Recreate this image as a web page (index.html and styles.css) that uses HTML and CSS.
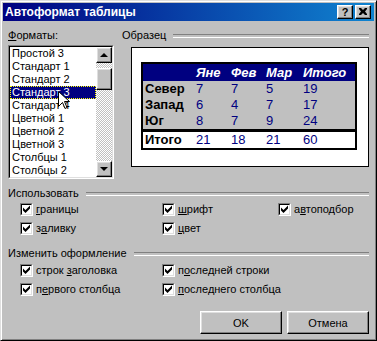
FILE: index.html
```html
<!DOCTYPE html>
<html lang="ru">
<head>
    <meta charset="UTF-8">
    <title>Автоформат таблицы</title>
    <link rel="stylesheet" href="styles.css">
</head>
<body>

    <div class="window">
        <!-- Title bar -->
        <div class="titlebar">
            <span class="title">Автоформат таблицы</span>
            <div class="title-buttons">
                <button class="tbtn">?</button>
                <button class="tbtn">
                    <svg width="8" height="7" viewBox="0 0 8 7">
                        <path d="M0 0h2l2 2 2-2h2v1L6 3.5 8 6v1H6L4 5 2 7H0V6l2-2.5L0 1z" fill="#000"/>
                    </svg>
                </button>
            </div>
        </div>

        <div class="dialog">
            <div class="top">
                <!-- Formats list -->
                <div class="formats">
                    <div class="label"><u>Ф</u>орматы:</div>
                    <div class="listbox">
                        <div class="listbox-in">
                            <ul class="items">
                                <li>Простой 3</li>
                                <li>Стандарт 1</li>
                                <li>Стандарт 2</li>
                                <li class="selected">Стандарт 3</li>
                                <li>Стандарт 4</li>
                                <li>Цветной 1</li>
                                <li>Цветной 2</li>
                                <li>Цветной 3</li>
                                <li>Столбцы 1</li>
                                <li>Столбцы 2</li>
                            </ul>
                            <div class="scrollbar">
                                <div class="sbtn"><span class="arrow-up"></span></div>
                                <div class="track"><div class="thumb"></div></div>
                                <div class="sbtn"><span class="arrow-down"></span></div>
                            </div>
                        </div>
                        <svg class="cursor" width="12" height="19" viewBox="0 0 12 19">
                            <polygon points="0.5,0.5 0.5,15.5 4.5,11.5 7,17.5 9,16.5 6.5,10.5 11.5,10.5" fill="#fff" stroke="#000"/>
                        </svg>
                    </div>
                </div>

                <!-- Sample -->
                <div class="sample">
                    <div class="group-head">Образец</div>
                    <div class="preview">
                        <table class="demo">
                            <tr class="head">
                                <th class="c1"></th>
                                <th class="c2">Яне</th>
                                <th class="c3">Фев</th>
                                <th class="c4">Мар</th>
                                <th class="c5">Итого</th>
                            </tr>
                            <tr><td class="name">Север</td><td>7</td><td>7</td><td>5</td><td>19</td></tr>
                            <tr><td class="name">Запад</td><td>6</td><td>4</td><td>7</td><td>17</td></tr>
                            <tr><td class="name">Юг</td><td>8</td><td>7</td><td>9</td><td>24</td></tr>
                            <tr class="total"><td class="name">Итого</td><td>21</td><td>18</td><td>21</td><td>60</td></tr>
                        </table>
                    </div>
                </div>
            </div>

            <!-- Use -->
            <div class="group-head gap-use">Использовать</div>
            <div class="checks three">
                <label class="check"><span class="box"><span class="box-in"><svg width="9" height="9" viewBox="0 0 9 9"><polygon points="1,2.5 3.5,5 8,0.5 8,3.5 3.5,8 1,5.5"/></svg></span></span><span><u>г</u>раницы</span></label>
                <label class="check"><span class="box"><span class="box-in"><svg width="9" height="9" viewBox="0 0 9 9"><polygon points="1,2.5 3.5,5 8,0.5 8,3.5 3.5,8 1,5.5"/></svg></span></span><span><u>ш</u>рифт</span></label>
                <label class="check"><span class="box"><span class="box-in"><svg width="9" height="9" viewBox="0 0 9 9"><polygon points="1,2.5 3.5,5 8,0.5 8,3.5 3.5,8 1,5.5"/></svg></span></span><span>а<u>в</u>топодбор</span></label>
                <label class="check"><span class="box"><span class="box-in"><svg width="9" height="9" viewBox="0 0 9 9"><polygon points="1,2.5 3.5,5 8,0.5 8,3.5 3.5,8 1,5.5"/></svg></span></span><span>з<u>а</u>ливку</span></label>
                <label class="check"><span class="box"><span class="box-in"><svg width="9" height="9" viewBox="0 0 9 9"><polygon points="1,2.5 3.5,5 8,0.5 8,3.5 3.5,8 1,5.5"/></svg></span></span><span><u>ц</u>вет</span></label>
            </div>

            <!-- Change formatting -->
            <div class="group-head gap-change">Изменить оформление</div>
            <div class="checks two">
                <label class="check"><span class="box"><span class="box-in"><svg width="9" height="9" viewBox="0 0 9 9"><polygon points="1,2.5 3.5,5 8,0.5 8,3.5 3.5,8 1,5.5"/></svg></span></span><span>строк <u>з</u>аголовка</span></label>
                <label class="check"><span class="box"><span class="box-in"><svg width="9" height="9" viewBox="0 0 9 9"><polygon points="1,2.5 3.5,5 8,0.5 8,3.5 3.5,8 1,5.5"/></svg></span></span><span>п<u>о</u>следней строки</span></label>
                <label class="check"><span class="box"><span class="box-in"><svg width="9" height="9" viewBox="0 0 9 9"><polygon points="1,2.5 3.5,5 8,0.5 8,3.5 3.5,8 1,5.5"/></svg></span></span><span>п<u>е</u>рвого столбца</span></label>
                <label class="check"><span class="box"><span class="box-in"><svg width="9" height="9" viewBox="0 0 9 9"><polygon points="1,2.5 3.5,5 8,0.5 8,3.5 3.5,8 1,5.5"/></svg></span></span><span><u>п</u>оследнего столбца</span></label>
            </div>

            <div class="actions">
                <button class="btn">OK</button>
                <button class="btn">Отмена</button>
            </div>
        </div>
    </div>

</body>
</html>
```

FILE: styles.css
```css
/* Classic dialog */
* {
    box-sizing: border-box;
}
body {
    margin: 0;
    background: #c0c0c0;
    font-family: "Liberation Sans", Arial, sans-serif;
    font-size: 11px;
    color: #000;
}
u {
    text-decoration: underline;
    text-underline-offset: 1px;
}

.window {
    width: 377px;
    height: 341px;
    padding: 2px;
    background: #c0c0c0;
    border: 1px solid;
    border-color: #dfdfdf #000 #000 #dfdfdf;
    box-shadow: inset 1px 1px #fff, inset -1px -1px #808080;
    display: flex;
    flex-direction: column;
}

/* Title bar */
.titlebar {
    height: 18px;
    padding: 0 3px 0 2px;
    background: linear-gradient(to right, #000080, #1084d0);
    color: #fff;
    display: flex;
    align-items: center;
    justify-content: space-between;
}
.title {
    font-weight: bold;
    font-size: 12px;
}
.title-buttons {
    display: flex;
    gap: 2px;
}
.tbtn, .btn, .sbtn, .thumb {
    background: #c0c0c0;
    border: 1px solid;
    border-color: #fff #000 #000 #fff;
    box-shadow: inset -1px -1px #808080, inset 1px 1px #dfdfdf;
}
.tbtn {
    width: 16px;
    height: 14px;
    padding: 0 0 1px 0;
    display: flex;
    align-items: center;
    justify-content: center;
    font: bold 11px "Liberation Sans", Arial, sans-serif;
    color: #000;
}

/* Dialog body */
.dialog {
    flex: 1;
    padding: 8px 5px 0 5px;
    display: flex;
    flex-direction: column;
}
.top {
    display: grid;
    grid-template-columns: 106px 1fr;
    column-gap: 8px;
}
.label {
    height: 13px;
    line-height: 13px;
}

/* List box */
.listbox {
    position: relative;
    margin-top: 3px;
    border: 1px solid;
    border-color: #808080 #fff #fff #808080;
}
.listbox-in {
    height: 132px;
    border: 1px solid;
    border-color: #000 #dfdfdf #dfdfdf #000;
    background: #fff;
    display: flex;
}
.items {
    flex: 1;
    margin: 0;
    padding: 0;
    list-style: none;
}
.items li {
    height: 13px;
    line-height: 13px;
    padding-left: 2px;
    white-space: nowrap;
}
.items li.selected {
    background: #000080;
    color: #fff;
    outline: 1px dotted #ffff00;
    outline-offset: -1px;
}
.scrollbar {
    width: 16px;
    display: flex;
    flex-direction: column;
}
.sbtn {
    height: 16px;
    display: flex;
    align-items: center;
    justify-content: center;
}
.arrow-up, .arrow-down {
    width: 0;
    height: 0;
    border: 4px solid transparent;
}
.arrow-up {
    border-top: 0;
    border-bottom-color: #000;
}
.arrow-down {
    border-bottom: 0;
    border-top-color: #000;
}
.track {
    flex: 1;
    padding-top: 5px;
    background: repeating-conic-gradient(#fff 0 25%, #c0c0c0 0 50%) 0 0 / 2px 2px;
}
.thumb {
    height: 22px;
}
.cursor {
    position: absolute;
    left: 49px;
    top: 45px;
}

/* Group headings with etched line */
.group-head {
    height: 13px;
    line-height: 13px;
    display: flex;
    align-items: center;
    gap: 7px;
}
.group-head::after {
    content: "";
    flex: 1;
    height: 2px;
    border-top: 1px solid #808080;
    border-bottom: 1px solid #fff;
}
.gap-use { margin-top: 8px; }
.gap-change { margin-top: 12px; }

/* Sample preview */
.preview {
    margin: 5px 0 0 9px;
    height: 120px;
    padding: 14px 0 0 9px;
    background: #fff;
    border: 1px solid #000;
}
.demo {
    width: 216px;
    border-collapse: separate;
    border-spacing: 0;
    border: 2px solid #000;
    background: #c0c0c0;
    font-size: 13px;
    line-height: 16px;
}
.demo th, .demo td {
    padding: 0 0 0 2px;
    text-align: left;
    height: 16px;
    color: #000080;
}
.demo .head th {
    height: 17px;
    background: #000080;
    color: #fff;
    font-weight: bold;
    font-style: italic;
}
.demo .c1 { width: 51px; }
.demo .c2, .demo .c3 { width: 35px; }
.demo .c4 { width: 37px; }
.demo td.name {
    color: #000;
    font-weight: bold;
}
.demo .total td {
    background: #fff;
    border-top: 3px solid #000;
}

/* Check boxes */
.checks {
    display: grid;
    row-gap: 6px;
    padding-left: 12px;
}
.checks.three {
    margin-top: 3px;
    grid-template-columns: 142px 116px 1fr;
}
.checks.two {
    margin-top: 4px;
    grid-template-columns: 142px 1fr;
}
.check {
    height: 13px;
    line-height: 13px;
    display: flex;
    align-items: center;
    gap: 3px;
    white-space: nowrap;
}
.box {
    width: 13px;
    height: 13px;
    border: 1px solid;
    border-color: #808080 #fff #fff #808080;
}
.box-in {
    display: block;
    width: 11px;
    height: 11px;
    border: 1px solid;
    border-color: #000 #dfdfdf #dfdfdf #000;
    background: #fff;
}
.box-in svg {
    display: block;
}

/* Buttons */
.actions {
    margin-top: 15px;
    display: flex;
    justify-content: flex-end;
    gap: 5px;
}
.btn {
    width: 82px;
    height: 23px;
    font: 11px "Liberation Sans", Arial, sans-serif;
    color: #000;
}
```
